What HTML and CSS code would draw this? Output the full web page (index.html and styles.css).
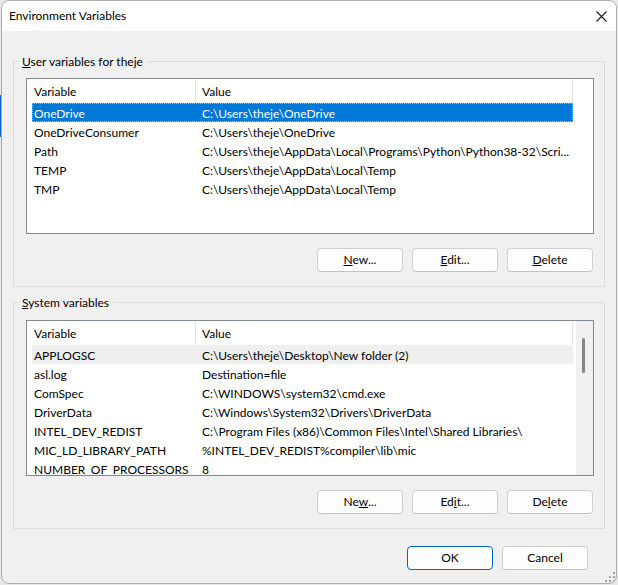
FILE: index.html
```html
<!DOCTYPE html>
<html lang="en">
<head>
<meta charset="utf-8">
<title>Environment Variables</title>
<link rel="stylesheet" href="styles.css">
</head>
<body>
<div class="window">
  <div class="titlebar">
    <span class="title">Environment Variables</span>
    <svg class="close" viewBox="0 0 11 11" width="11" height="11" aria-hidden="true"><path d="M0.5 0.5 L10.5 10.5 M10.5 0.5 L0.5 10.5" stroke="#1b1b1b" stroke-width="1.1" fill="none"/></svg>
  </div>
  <div class="content">
    <fieldset class="group">
      <legend><u>U</u>ser variables for theje</legend>
      <div class="group-body">
        <div class="list">
          <div class="list-main">
            <div class="lv-row lv-head"><div class="cell c1">Variable</div><div class="cell c2">Value</div></div>
            <div class="lv-row selected"><div class="cell c1">OneDrive</div><div class="cell c2">C:\Users\theje\OneDrive</div></div>
            <div class="lv-row"><div class="cell c1">OneDriveConsumer</div><div class="cell c2">C:\Users\theje\OneDrive</div></div>
            <div class="lv-row"><div class="cell c1">Path</div><div class="cell c2">C:\Users\theje\AppData\Local\Programs\Python\Python38-32\Scri...</div></div>
            <div class="lv-row"><div class="cell c1">TEMP</div><div class="cell c2">C:\Users\theje\AppData\Local\Temp</div></div>
            <div class="lv-row"><div class="cell c1">TMP</div><div class="cell c2">C:\Users\theje\AppData\Local\Temp</div></div>
          </div>
        </div>
        <div class="btn-row">
          <button class="btn"><u>N</u>ew...</button>
          <button class="btn"><u>E</u>dit...</button>
          <button class="btn"><u>D</u>elete</button>
        </div>
      </div>
    </fieldset>

    <fieldset class="group group-system">
      <legend><u>S</u>ystem variables</legend>
      <div class="group-body">
        <div class="list">
          <div class="list-main">
            <div class="lv-row lv-head"><div class="cell c1">Variable</div><div class="cell c2">Value</div></div>
            <div class="lv-row hot"><div class="cell c1">APPLOGSC</div><div class="cell c2">C:\Users\theje\Desktop\New folder (2)</div></div>
            <div class="lv-row"><div class="cell c1">asl.log</div><div class="cell c2">Destination=file</div></div>
            <div class="lv-row"><div class="cell c1">ComSpec</div><div class="cell c2">C:\WINDOWS\system32\cmd.exe</div></div>
            <div class="lv-row"><div class="cell c1">DriverData</div><div class="cell c2">C:\Windows\System32\Drivers\DriverData</div></div>
            <div class="lv-row"><div class="cell c1">INTEL_DEV_REDIST</div><div class="cell c2">C:\Program Files (x86)\Common Files\Intel\Shared Libraries\</div></div>
            <div class="lv-row"><div class="cell c1">MIC_LD_LIBRARY_PATH</div><div class="cell c2">%INTEL_DEV_REDIST%compiler\lib\mic</div></div>
            <div class="lv-row"><div class="cell c1">NUMBER_OF_PROCESSORS</div><div class="cell c2">8</div></div>
          </div>
          <div class="vscroll"><div class="thumb"></div></div>
        </div>
        <div class="btn-row">
          <button class="btn">Ne<u>w</u>...</button>
          <button class="btn">Ed<u>i</u>t...</button>
          <button class="btn">De<u>l</u>ete</button>
        </div>
      </div>
    </fieldset>

    <div class="footer">
      <button class="btn btn-default">OK</button>
      <button class="btn">Cancel</button>
    </div>
  </div>
  <svg class="grip" viewBox="0 0 10 10" width="10" height="10" aria-hidden="true">
    <rect x="8" y="0" width="2" height="2" fill="#a3a3a3"/>
    <rect x="4" y="4" width="2" height="2" fill="#a3a3a3"/>
    <rect x="8" y="4" width="2" height="2" fill="#a3a3a3"/>
    <rect x="0" y="8" width="2" height="2" fill="#a3a3a3"/>
    <rect x="4" y="8" width="2" height="2" fill="#a3a3a3"/>
    <rect x="8" y="8" width="2" height="2" fill="#a3a3a3"/>
  </svg>
</div>
</body>
</html>
```
FILE: styles.css
```css
* {
  box-sizing: border-box;
}

body {
  margin: 0;
  background: linear-gradient(#0a64c8, #0a64c8) 0 95px / 1px 42px no-repeat, #e8e8e8;
  font-family: Lato, "Liberation Sans", sans-serif;
  font-size: 12px;
  line-height: 16px;
  color: #000;
}

.window {
  position: relative;
  margin-left: 1px;
  width: 616px;
  height: 584px;
  border: 1px solid #adadad;
  border-radius: 8px;
  background: #f0f0f0;
  overflow: hidden;
  display: flex;
  flex-direction: column;
}

.titlebar {
  flex: none;
  height: 30px;
  background: #fff;
  display: flex;
  align-items: center;
  padding: 0 9px 0 7px;
}

.title {
  color: #000;
}

.close {
  margin-left: auto;
  display: block;
}

.content {
  flex: 1;
  display: flex;
  flex-direction: column;
  padding: 22px 11px 0 11px;
}

.group {
  margin: 0;
  padding: 0;
  min-width: 0;
  border: 1px solid #dcdcdc;
}

.group + .group {
  margin-top: 7px;
}

.group legend {
  margin-left: 4px;
  padding: 0 4px;
  line-height: 17px;
}

.group-body {
  padding: 8px 10px 14px 12px;
}

.group-system .group-body {
  padding-top: 9px;
}

.list {
  height: 156px;
  border: 1px solid #828790;
  background: #fff;
  display: flex;
  overflow: hidden;
}

.list-main {
  flex: 1;
  min-width: 0;
  padding-left: 5px;
}

.lv-row {
  display: grid;
  grid-template-columns: 164px 377px;
  width: 541px;
  height: 19px;
  align-items: center;
}

.cell {
  padding-top: 2px;
  padding-left: 2px;
  white-space: nowrap;
  overflow: hidden;
}

.c2 {
  padding-left: 6px;
}

.lv-head {
  height: 24px;
  align-items: stretch;
}

.lv-head .cell {
  display: flex;
  align-items: center;
  border-right: 1px solid #e5e5e5;
}

.selected {
  background: #0078d7;
  color: #fff;
  outline: 1px dotted #f3a45e;
  outline-offset: -1px;
}

.hot {
  background: #efefef;
}

.vscroll {
  flex: none;
  width: 17px;
  background: #f0f0f0;
  padding: 17px 0 0 6px;
}

.thumb {
  width: 3px;
  height: 35px;
  border-radius: 2px;
  background: #868686;
}

.btn-row {
  display: flex;
  justify-content: flex-end;
  gap: 9px;
  margin-top: 14px;
  margin-right: 1px;
}

.btn {
  width: 86px;
  height: 24px;
  padding: 0;
  border: 1px solid #d0d0d0;
  border-bottom-color: #c2c2c2;
  border-radius: 4px;
  background: #fdfdfd;
  font: inherit;
  color: #000;
}

.btn u {
  text-underline-offset: 1px;
}

.btn-default {
  border-color: #0067c0;
}

.footer {
  display: flex;
  justify-content: flex-end;
  gap: 9px;
  margin-top: 17px;
  margin-right: 17px;
}

.grip {
  position: absolute;
  right: 1px;
  bottom: 1px;
}
```
